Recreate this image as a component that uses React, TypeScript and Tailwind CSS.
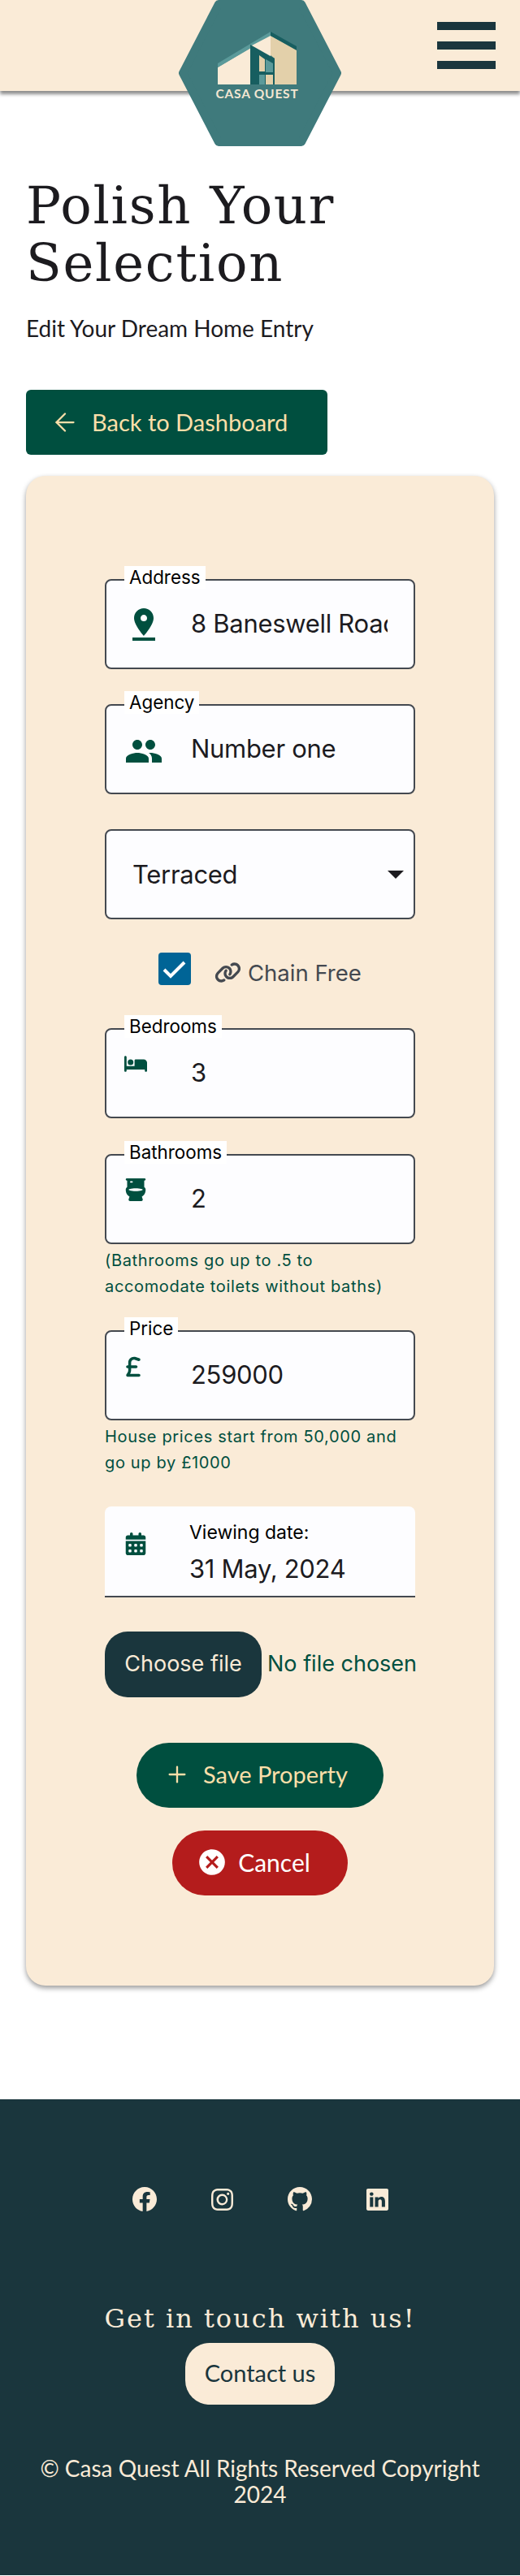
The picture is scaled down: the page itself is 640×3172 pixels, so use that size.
import type { ReactNode } from "react";
import { ArrowLeft, Plus } from "lucide-react";
import { BsFacebook, BsGithub, BsInstagram, BsLinkedin } from "react-icons/bs";
import { FaBed, FaCalendarDays, FaLink, FaSterlingSign, FaToilet } from "react-icons/fa6";
import { MdCancel, MdPeople, MdPinDrop } from "react-icons/md";

const serif = "font-['DejaVu_Serif',serif]";
const round = "font-['Lato',sans-serif]";
const valueText = "text-[31px] leading-[40px] tracking-[-0.3px] text-[#1c1b1f]";

function Logo() {
  return (
    <svg viewBox="0 0 200 180" className="absolute left-[220px] top-0 h-[180px] w-[200px]">
      <polygon
        points="49,5 151,5 195,90 151,175 49,175 5,90"
        fill="#3f7a7c"
        stroke="#3f7a7c"
        strokeWidth="10"
        strokeLinejoin="round"
      />
      <polygon points="48,83 88,59 88,104 48,104" fill="#faebd7" />
      <polygon points="48,78 113,39 113,45 48,83" fill="#5b9a9a" />
      <polygon points="88,57 113,44 113,70 88,60" fill="#faebd7" />
      <polygon points="113,44 145,61 145,104 118,104 118,72 113,68" fill="#e3d0aa" />
      <polygon points="113,39 145,57 145,62 113,44" fill="#175e60" />
      <polygon points="88,55 118,72 118,104 88,104" fill="#175e60" />
      <polygon points="99,68 106,73 106,88 99,88" fill="#e3d0aa" />
      <polygon points="107,73 116,78 116,89 107,89" fill="#5b9a9a" />
      <rect x="99" y="92" width="7" height="12" fill="#5b9a9a" />
      <rect x="107" y="92" width="9" height="12" fill="#e3d0aa" />
      <text
        x="96.5"
        y="121"
        textAnchor="middle"
        fill="#f3e6d2"
        fontFamily="Lato, sans-serif"
        fontSize="15.5"
        fontWeight="700"
        letterSpacing="0.8"
      >
        CASA QUEST
      </text>
    </svg>
  );
}

function Header() {
  return (
    <header className="relative z-10 flex h-[112px] items-start justify-end bg-[#faebd7] pr-[30px] pt-[27px] shadow-[0_4px_4px_rgba(0,0,0,0.45)]">
      <Logo />
      <div className="flex w-[72px] flex-col gap-[14px]">
        <span className="h-[10px] bg-[#1a363d]" />
        <span className="h-[10px] bg-[#1a363d]" />
        <span className="h-[10px] bg-[#1a363d]" />
      </div>
    </header>
  );
}

interface FieldProps {
  label: string;
  value: string;
  icon: ReactNode;
  iconClass: string;
}

function Field({ label, value, icon, iconClass }: FieldProps) {
  return (
    <div className="relative flex h-[111px] items-start rounded-[8px] border-2 border-[#444950] bg-[#fdfdff]">
      <span className="absolute left-[22px] top-[-18px] bg-white px-[6px] text-[22.4px] leading-[28px] text-black">
        {label}
      </span>
      <div className={`flex w-[104px] shrink-0 pl-[22px] text-[#004f3f] ${iconClass}`}>{icon}</div>
      <div className={`mt-[33px] w-[242px] overflow-hidden whitespace-nowrap ${valueText}`}>{value}</div>
    </div>
  );
}

function Hint({ children }: { children: ReactNode }) {
  return <p className="mt-[4px] text-[20px] leading-[32px] tracking-[0.65px] text-[#004f3f]">{children}</p>;
}

function PropertyForm() {
  return (
    <section className="mx-[32px] mt-[26px] rounded-[24px] bg-[#faebd7] px-[97px] pb-[111px] pt-[127px] shadow-[0_3px_6px_rgba(0,0,0,0.4)]">
      <Field label="Address" value="8 Baneswell Road" icon={<MdPinDrop size={48} />} iconClass="mt-[30px]" />
      <div className="mt-[43px]">
        <Field label="Agency" value="Number one" icon={<MdPeople size={48} />} iconClass="mt-[32px]" />
      </div>

      <div className="mt-[43px] flex h-[111px] items-center justify-between rounded-[8px] border-2 border-[#444950] bg-[#fdfdff] pl-[32px] pr-[12px]">
        <span className={valueText}>Terraced</span>
        <span className="h-0 w-0 border-x-[10px] border-t-[10px] border-x-transparent border-t-[#1c1b1f]" />
      </div>

      <div className="mt-[41px] flex h-[40px] items-center pl-[66px]">
        <span className="flex h-[40px] w-[40px] items-center justify-center rounded-[4px] bg-[#006496]">
          <svg viewBox="0 0 40 40" className="h-[40px] w-[40px]">
            <polyline points="7,21 15,29 32,12" fill="none" stroke="#fff" strokeWidth="4" />
          </svg>
        </span>
        <FaLink className="ml-[29px] mt-[9px] h-[33px] w-auto text-[#444950]" />
        <span className="ml-[8px] mt-[9px] text-[27.5px] leading-[36px] text-[#444950]">Chain Free</span>
      </div>

      <div className="mt-[53px]">
        <Field label="Bedrooms" value="3" icon={<FaBed className="h-[28px] w-auto" />} iconClass="mt-[28px]" />
      </div>
      <div className="mt-[44px]">
        <Field label="Bathrooms" value="2" icon={<FaToilet className="h-[28px] w-auto" />} iconClass="mt-[28px]" />
      </div>
      <Hint>
        (Bathrooms go up to .5 to
        <br />
        accomodate toilets without baths)
      </Hint>

      <div className="mt-[38px]">
        <Field
          label="Price"
          value="259000"
          icon={<FaSterlingSign className="ml-[-3px] h-[28px] w-auto" />}
          iconClass="mt-[29px]"
        />
      </div>
      <Hint>
        House prices start from 50,000 and
        <br />
        go up by £1000
      </Hint>

      <div className="mt-[38px] flex h-[112px] rounded-t-[8px] border-b-2 border-[#444950] bg-[#fdfdff]">
        <div className="w-[104px] shrink-0 pl-[24px] pt-[32px] text-[#004f3f]">
          <FaCalendarDays className="h-[28px] w-auto" />
        </div>
        <div>
          <p className="mt-[17px] text-[23px] leading-[30px] text-black">Viewing date:</p>
          <p className={`mt-[10px] ${valueText}`}>31 May, 2024</p>
        </div>
      </div>

      <div className="mt-[42px] flex items-center whitespace-nowrap">
        <span className="flex h-[81px] w-[193px] shrink-0 items-center justify-center rounded-[28px] bg-[#1a363d] text-[27px] text-[#faebd7]">
          Choose file
        </span>
        <span className="ml-[7px] text-[27px] text-[#004f3f]">No file chosen</span>
      </div>

      <div className={`mt-[56px] flex flex-col items-center gap-[28px] ${round}`}>
        <button
          type="button"
          className="flex h-[80px] w-[304px] items-center justify-center gap-[16px] rounded-full bg-[#004f3f] pb-[2px] pr-[10px] text-[29px] text-[#fbdfa9]"
        >
          <Plus size={32} strokeWidth={1.75} />
          Save Property
        </button>
        <button
          type="button"
          className="flex h-[80px] w-[216px] items-center justify-center gap-[13px] rounded-full bg-[#b41c1c] pb-[2px] pr-[16px] text-[30px] text-white"
        >
          <MdCancel size={38} />
          Cancel
        </button>
      </div>
    </section>
  );
}

function Footer() {
  return (
    <footer className="mt-[140px] flex h-[586px] flex-col items-center bg-[#1a363d] text-[#faebd7]">
      <div className="mt-[108px] flex items-center gap-[67px]">
        <BsFacebook size={30} />
        <BsInstagram size={27} />
        <BsGithub size={30} />
        <BsLinkedin size={27} />
      </div>
      <h2 className={`mt-[110px] text-[32px] leading-[44px] tracking-[2px] ${serif}`}>Get in touch with us!</h2>
      <button
        type="button"
        className={`mt-[8px] flex h-[76px] w-[184px] items-center justify-center rounded-[30px] bg-[#faebd7] pb-[2px] text-[29px] text-[#1a363d] ${round}`}
      >
        Contact us
      </button>
      <p className={`mt-[62px] w-[560px] text-center text-[28px] leading-[32px] ${round}`}>
        © Casa Quest All Rights Reserved Copyright 2024
      </p>
    </footer>
  );
}

export default function App() {
  return (
    <div className="min-h-[3172px] bg-white font-['Inter',sans-serif]">
      <Header />
      <main>
        <div className="px-[32px] pt-[106px]">
          <h1 className={`text-[64px] leading-[71px] tracking-[1.7px] text-[#1c1b1f] ${serif}`}>Polish Your Selection</h1>
          <p className={`mt-[26px] text-[28px] leading-[36px] text-[#1c1b1f] ${round}`}>Edit Your Dream Home Entry</p>
          <a
            href="#dashboard"
            className={`mt-[58px] flex h-[80px] w-[371px] items-center gap-[15px] rounded-[6px] bg-[#004f3f] pl-[30px] text-[29px] text-[#fbdfa9] ${round}`}
          >
            <ArrowLeft size={36} strokeWidth={1.5} />
            Back to Dashboard
          </a>
        </div>
        <PropertyForm />
      </main>
      <Footer />
    </div>
  );
}
